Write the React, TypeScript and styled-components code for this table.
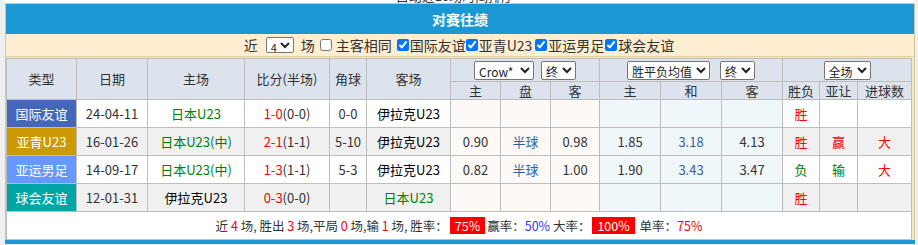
import React from 'react';
import styled, { createGlobalStyle } from 'styled-components';

const GlobalStyle = createGlobalStyle`
  html, body {
    margin: 0;
    padding: 0;
    background: #efefef;
    font-family: "Noto Sans CJK SC", "Liberation Sans", sans-serif;
    color: #333;
  }
`;

const Page = styled.div`
  width: 910px;
  margin-left: 5px;
`;

const PrevBox = styled.div`
  height: 3px;
  background: #fff;
  border-bottom: 1px solid #c8c8c8;
  overflow: hidden;
  text-align: center;
  padding-right: 10px;
`;

const PrevText = styled.div`
  font-size: 13px;
  line-height: 13px;
  margin-top: -11px;
  color: #333;
`;

const Section = styled.div`
  background: #f3e6c6;
  border-left: 1px solid #d6c59c;
  border-right: 1px solid #d6c59c;
`;

const TitleBar = styled.div`
  height: 30px;
  background: #1b97d4;
  color: #fff;
  font-size: 14px;
  font-weight: bold;
  display: flex;
  align-items: center;
  justify-content: center;
`;

const FilterBar = styled.div`
  height: 22px;
  background: #fdeed2;
  border-bottom: 1px solid #e4d2a4;
  margin-bottom: 1px;
  display: flex;
  align-items: center;
  justify-content: center;
  font-size: 14px;
  line-height: 22px;
  color: #333;
  padding-right: 2px;
`;

const Select = styled.select<{ $w: number; $h?: number }>`
  width: ${p => p.$w}px;
  height: ${p => p.$h ?? 19}px;
  box-sizing: border-box;
  font-family: "Noto Sans CJK SC", sans-serif;
  font-size: ${p => (p.$h && p.$h < 18 ? 11 : 12)}px;
  padding: 0;
  border: 1px solid #767676;
  border-radius: 2px;
  background: #fff;
  color: #222;
`;

const Check = styled.input.attrs({ type: 'checkbox', readOnly: true })<{ $gap?: number }>`
  width: 12px;
  height: 12px;
  margin: 0 1px 0 ${p => p.$gap ?? 0}px;
  accent-color: #0075ff;
`;

const Gap = styled.span<{ $w: number }>`
  display: inline-block;
  width: ${p => p.$w}px;
`;

const Table = styled.table`
  width: 906px;
  border-collapse: collapse;
  table-layout: fixed;
  background: #fff;
  font-size: 13px;
`;

const HeadRow = styled.tr<{ $h: number }>`
  height: ${p => p.$h}px;
  background: #dce3ec;
`;

const Th = styled.th`
  border: 1px solid #bdbdbd;
  padding: 0;
  font-weight: normal;
  color: #333;
  font-size: 13px;
  line-height: 16px;
  text-align: center;
  vertical-align: middle;
`;

const SelectGroup = styled.div<{ $gap: number }>`
  display: flex;
  justify-content: center;
  align-items: center;
  gap: ${p => p.$gap}px;
`;

const Row = styled.tr<{ $alt: boolean }>`
  height: 28px;
  background: ${p => (p.$alt ? '#f0f0f0' : '#fff')};
`;

const Td = styled.td<{ $bg?: string; $color?: string }>`
  border: 1px solid #bdbdbd;
  padding: 0;
  text-align: center;
  vertical-align: middle;
  line-height: 16px;
  color: ${p => p.$color ?? '#333'};
  background: ${p => p.$bg ?? 'transparent'};
  white-space: nowrap;
`;

const TypeCell = styled(Td)`
  color: #fff;
  font-size: 13px;
`;

const Red = styled.span`
  color: #ff0000;
`;

const Blue = styled.span`
  color: #3333ff;
`;

const SummaryCell = styled.td`
  border: 1px solid #bdbdbd;
  padding: 0;
  height: 27px;
  text-align: center;
  vertical-align: middle;
  font-size: 12.5px;
  line-height: 17px;
  color: #333;
  background: #fff;
`;

const Badge = styled.span`
  display: inline-block;
  background: #ff0000;
  color: #fff;
  padding: 0 5px;
  line-height: 17px;
  margin: 0 2px;
`;

const BottomBar = styled.div`
  height: 4px;
  background: #1b97d4;
`;

const CROW_BG = '#fdf9f6';
const ODDS_BG = '#eff7fb';
const GREEN = '#008000';

type Match = {
  type: string;
  typeBg: string;
  date: string;
  home: string;
  homeGreen: boolean;
  score: string;
  half: string;
  corner: string;
  away: string;
  awayGreen: boolean;
  crow: [string, string, string];
  odds: [string, string, string];
  result: [string, string];
  handicap: [string, string];
  goals: [string, string];
};

const matches: Match[] = [
  {
    type: '国际友谊', typeBg: '#4466bb', date: '24-04-11', home: '日本U23', homeGreen: true,
    score: '1-0', half: '(0-0)', corner: '0-0', away: '伊拉克U23', awayGreen: false,
    crow: ['', '', ''], odds: ['', '', ''], result: ['胜', '#ff0000'], handicap: ['', ''], goals: ['', ''],
  },
  {
    type: '亚青U23', typeBg: '#cc9900', date: '16-01-26', home: '日本U23(中)', homeGreen: true,
    score: '2-1', half: '(1-1)', corner: '5-10', away: '伊拉克U23', awayGreen: false,
    crow: ['0.90', '半球', '0.98'], odds: ['1.85', '3.18', '4.13'],
    result: ['胜', '#ff0000'], handicap: ['赢', '#ff0000'], goals: ['大', '#ff0000'],
  },
  {
    type: '亚运男足', typeBg: '#6699ff', date: '14-09-17', home: '日本U23(中)', homeGreen: true,
    score: '1-3', half: '(1-1)', corner: '5-3', away: '伊拉克U23', awayGreen: false,
    crow: ['0.82', '半球', '1.00'], odds: ['1.90', '3.43', '3.47'],
    result: ['负', GREEN], handicap: ['输', GREEN], goals: ['大', '#ff0000'],
  },
  {
    type: '球会友谊', typeBg: '#00a6a6', date: '12-01-31', home: '伊拉克U23', homeGreen: false,
    score: '0-3', half: '(0-0)', corner: '', away: '日本U23', awayGreen: true,
    crow: ['', '', ''], odds: ['', '', ''], result: ['胜', '#ff0000'], handicap: ['', ''], goals: ['', ''],
  },
];

const colWidths = [70, 71, 97, 85, 37, 84, 50, 50, 49, 61, 61, 61, 37, 38, 54];

const App: React.FC = () => {
  return (
    <>
      <GlobalStyle />
      <Page>
        <PrevBox>
          <PrevText>自动近10场时间排序</PrevText>
        </PrevBox>
        <Section>
          <TitleBar>对赛往绩</TitleBar>
          <FilterBar>
            近<Gap $w={8} />
            <Select $w={28} $h={16} defaultValue="4">
              <option value="4">4</option>
              <option value="6">6</option>
              <option value="10">10</option>
            </Select>
            <Gap $w={7} />场
            <Check $gap={5} />
            <Gap $w={3} />主客相同
            <Check $gap={5} defaultChecked />国际友谊
            <Check defaultChecked />亚青U23
            <Check $gap={3} defaultChecked />亚运男足
            <Check $gap={1} defaultChecked />球会友谊
          </FilterBar>
          <Table>
            <colgroup>
              {colWidths.map((w, i) => (
                <col key={i} style={{ width: w }} />
              ))}
            </colgroup>
            <thead>
              <HeadRow $h={23}>
                <Th rowSpan={2}>类型</Th>
                <Th rowSpan={2}>日期</Th>
                <Th rowSpan={2}>主场</Th>
                <Th rowSpan={2}>比分(半场)</Th>
                <Th rowSpan={2}>角球</Th>
                <Th rowSpan={2}>客场</Th>
                <Th colSpan={3}>
                  <SelectGroup $gap={7}>
                    <Select $w={60} defaultValue="crow">
                      <option value="crow">Crow*</option>
                    </Select>
                    <Select $w={35} defaultValue="end">
                      <option value="end">终</option>
                    </Select>
                  </SelectGroup>
                </Th>
                <Th colSpan={3}>
                  <SelectGroup $gap={10}>
                    <Select $w={83} defaultValue="avg">
                      <option value="avg">胜平负均值</option>
                    </Select>
                    <Select $w={35} defaultValue="end">
                      <option value="end">终</option>
                    </Select>
                  </SelectGroup>
                </Th>
                <Th colSpan={3}>
                  <SelectGroup $gap={0}>
                    <Select $w={47} defaultValue="all">
                      <option value="all">全场</option>
                    </Select>
                  </SelectGroup>
                </Th>
              </HeadRow>
              <HeadRow $h={18}>
                <Th>主</Th>
                <Th>盘</Th>
                <Th>客</Th>
                <Th>主</Th>
                <Th>和</Th>
                <Th>客</Th>
                <Th>胜负</Th>
                <Th>亚让</Th>
                <Th>进球数</Th>
              </HeadRow>
            </thead>
            <tbody>
              {matches.map((m, i) => (
                <Row key={m.date} $alt={i % 2 === 1}>
                  <TypeCell $bg={m.typeBg}>{m.type}</TypeCell>
                  <Td>{m.date}</Td>
                  <Td $color={m.homeGreen ? GREEN : '#000'}>{m.home}</Td>
                  <Td>
                    <Red>{m.score}</Red>
                    {m.half}
                  </Td>
                  <Td>{m.corner}</Td>
                  <Td $color={m.awayGreen ? GREEN : '#000'}>{m.away}</Td>
                  <Td $bg={CROW_BG}>{m.crow[0]}</Td>
                  <Td $bg={CROW_BG} $color="#2f62a8">{m.crow[1]}</Td>
                  <Td $bg={CROW_BG}>{m.crow[2]}</Td>
                  <Td $bg={ODDS_BG}>{m.odds[0]}</Td>
                  <Td $bg={ODDS_BG} $color="#3d5f96">{m.odds[1]}</Td>
                  <Td $bg={ODDS_BG}>{m.odds[2]}</Td>
                  <Td $color={m.result[1]}>{m.result[0]}</Td>
                  <Td $color={m.handicap[1]}>{m.handicap[0]}</Td>
                  <Td $color={m.goals[1]}>{m.goals[0]}</Td>
                </Row>
              ))}
              <tr>
                <SummaryCell colSpan={15}>
                  近 <Red>4</Red> 场, 胜出 <Red>3</Red> 场,平局 <Red>0</Red> 场,输 <Red>1</Red> 场, 胜率：
                  <Badge>75%</Badge>赢率：<Blue>50%</Blue> 大率：
                  <Badge>100%</Badge> 单率：<Red>75%</Red>
                </SummaryCell>
              </tr>
            </tbody>
          </Table>
        </Section>
        <BottomBar />
      </Page>
    </>
  );
};

export default App;
